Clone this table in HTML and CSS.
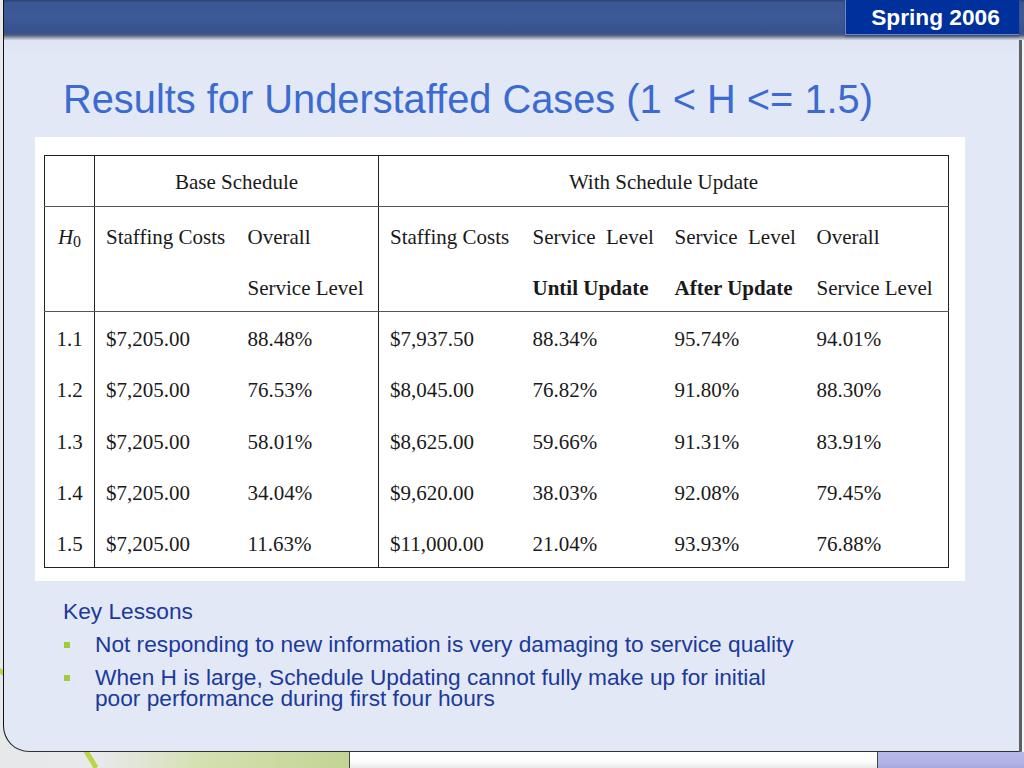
FILE: index.html
```html
<!DOCTYPE html>
<html lang="en">
<head>
<meta charset="utf-8">
<title>Results for Understaffed Cases</title>
<link rel="stylesheet" href="styles.css">
</head>
<body>
<div class="slide">
  <svg class="deco" width="1024" height="768" viewBox="0 0 1024 768" aria-hidden="true">
    <path d="M -20 660 Q 60 700 96 768" fill="none" stroke="#b9d54a" stroke-width="5"/>
  </svg>
  <header class="topbar">
    <div class="badge">Spring 2006</div>
  </header>
  <main class="panel">
    <h1 class="title">Results for Understaffed Cases (1 &lt; H &lt;= 1.5)</h1>
    <div class="figure">
      <table class="results">
        <colgroup>
          <col class="c0"><col class="c1"><col class="c1"><col class="c2"><col class="c1"><col class="c1"><col class="c2">
        </colgroup>
        <thead>
          <tr class="group-row">
            <th class="h0"></th>
            <th colspan="2" class="group vline">Base Schedule</th>
            <th colspan="4" class="group vline">With Schedule Update</th>
          </tr>
          <tr class="label-row">
            <th class="h0"><span class="ln"><i>H</i><sub>0</sub></span></th>
            <th class="vline"><span class="ln">Staffing Costs</span></th>
            <th><span class="ln">Overall</span><span class="ln ln2">Service Level</span></th>
            <th class="vline"><span class="ln">Staffing Costs</span></th>
            <th><span class="ln">Service&nbsp; Level</span><span class="ln ln2"><b>Until Update</b></span></th>
            <th><span class="ln">Service&nbsp; Level</span><span class="ln ln2"><b>After Update</b></span></th>
            <th><span class="ln">Overall</span><span class="ln ln2">Service Level</span></th>
          </tr>
        </thead>
        <tbody>
          <tr><td class="h0">1.1</td><td class="vline">$7,205.00</td><td>88.48%</td><td class="vline">$7,937.50</td><td>88.34%</td><td>95.74%</td><td>94.01%</td></tr>
          <tr><td class="h0">1.2</td><td class="vline">$7,205.00</td><td>76.53%</td><td class="vline">$8,045.00</td><td>76.82%</td><td>91.80%</td><td>88.30%</td></tr>
          <tr><td class="h0">1.3</td><td class="vline">$7,205.00</td><td>58.01%</td><td class="vline">$8,625.00</td><td>59.66%</td><td>91.31%</td><td>83.91%</td></tr>
          <tr><td class="h0">1.4</td><td class="vline">$7,205.00</td><td>34.04%</td><td class="vline">$9,620.00</td><td>38.03%</td><td>92.08%</td><td>79.45%</td></tr>
          <tr class="last"><td class="h0">1.5</td><td class="vline">$7,205.00</td><td>11.63%</td><td class="vline">$11,000.00</td><td>21.04%</td><td>93.93%</td><td>76.88%</td></tr>
        </tbody>
      </table>
    </div>
    <section class="lessons">
      <p class="lessons-head">Key Lessons</p>
      <ul class="lessons-list">
        <li>Not responding to new information is very damaging to service quality</li>
        <li>When H is large, Schedule Updating cannot fully make up for initial poor performance during first four hours</li>
      </ul>
    </section>
  </main>
  <footer class="strip">
    <div class="seg seg-green"></div>
    <div class="seg seg-white"></div>
    <div class="seg seg-lav"></div>
  </footer>
</div>
</body>
</html>
```

FILE: styles.css
```css
* { box-sizing: border-box; }
html, body { margin: 0; padding: 0; }
body {
  width: 1024px;
  height: 768px;
  overflow: hidden;
  font-family: "Liberation Sans", Arial, sans-serif;
  background: #eceef0;
}
.slide {
  position: relative;
  width: 1024px;
  height: 768px;
  display: flex;
  flex-direction: column;
  background: linear-gradient(90deg, #e6e8ea 0, #f2f3f4 100%);
}
.deco {
  position: absolute;
  left: 0;
  top: 0;
  z-index: 0;
}
.topbar {
  position: relative;
  z-index: 1;
  height: 40px;
  margin-left: 3px;
  border-left: 1px solid #111;
  display: flex;
  justify-content: flex-end;
  align-items: flex-start;
  background: linear-gradient(180deg, #2c4172 0, #3a5693 6%, #3d5a98 45%, #36518b 82%, #4d5c80 88%, #8c93a8 93%, #d3d7e2 100%);
}
.badge {
  width: 174px;
  height: 35px;
  margin-right: 5px;
  background: #00309c;
  border-left: 1px solid #6f86c4;
  border-bottom: 1px solid #7188c2;
  box-shadow: 0 2px 2px rgba(40, 50, 80, 0.45);
  color: #fff;
  font-weight: bold;
  font-size: 22.7px;
  line-height: 34px;
  text-align: center;
  padding-left: 6px;
}
.panel {
  position: relative;
  z-index: 1;
  height: 712px;
  margin-left: 3px;
  margin-right: 2px;
  border-left: 1px solid #111;
  border-right: 3px solid #5d5f66;
  border-bottom: 1px solid #333;
  border-bottom-left-radius: 26px;
  background: linear-gradient(180deg, #dfe4f2 0, #e3e8f7 2%, #e3e8f7 100%);
  padding-top: 36px;
}
.title {
  margin: 0 0 0 59px;
  font-weight: normal;
  font-size: 39.8px;
  line-height: 46px;
  color: #3b6bd0;
  white-space: nowrap;
}
.figure {
  margin: 15px 0 0 31px;
  width: 930px;
  height: 444px;
  background: #fff;
  padding: 18px 0 0 9px;
}
.results {
  table-layout: fixed;
  border-collapse: collapse;
  width: 904px;
  font-family: "Liberation Serif", "Times New Roman", serif;
  font-size: 21px;
  color: #1a1a1a;
  border: 1px solid #222;
}
.results .c0 { width: 50px; }
.results .c1 { width: 142px; }
.results .c2 { width: 143px; }
.results th, .results td {
  font-weight: normal;
  text-align: left;
  padding: 0 0 0 11px;
  white-space: nowrap;
  vertical-align: top;
}
.results b { font-weight: bold; }
.results .vline { border-left: 1px solid #222; }
.results .h0 { text-align: center; padding-left: 0; }
.group-row th {
  height: 50px;
  padding-top: 3px;
  line-height: 47px;
  text-align: center;
  padding-left: 0;
  border-bottom: 1px solid #555;
}
.label-row th {
  padding-top: 15px;
  padding-bottom: 8px;
  border-bottom: 1px solid #555;
}
.label-row .ln {
  display: block;
  line-height: 30px;
  height: 30px;
}
.label-row .ln2 { margin-top: 21px; }
.label-row th:not(:has(.ln2))::after {
  content: "";
  display: block;
  height: 51px;
}
.label-row .h0 i { font-style: italic; }
.label-row .h0 sub { font-size: 16px; vertical-align: -3px; line-height: 0; }
.results tbody td {
  line-height: 30px;
  padding-top: 12px;
  padding-bottom: 9.25px;
}
.results tbody tr.last td { padding-bottom: 8px; }
.lessons {
  margin: 19px 0 0 59px;
  color: #1b3a9a;
  font-size: 22.7px;
}
.lessons-head {
  margin: 0;
  line-height: 22px;
}
.lessons-list {
  list-style: none;
  margin: 0;
  padding: 0;
  width: 750px;
}
.lessons-list li {
  display: flex;
  margin-top: 12px;
  line-height: 21px;
}
.lessons-list li::before {
  content: "";
  flex: 0 0 6px;
  width: 6px;
  height: 6px;
  margin: 8px 25px 0 1px;
  background: #9fcb3c;
}
.strip {
  position: relative;
  z-index: 1;
  flex: 1;
  display: flex;
}
.seg { height: 16px; }
.seg-green {
  width: 350px;
  background: linear-gradient(90deg, rgba(236, 238, 232, 0) 0, rgba(236, 238, 232, 0) 100px, #d5e0b2 200px, #c3d493 350px);
  border-right: 1px solid #444;
}
.seg-white {
  width: 528px;
  background: linear-gradient(180deg, #ffffff 0, #fdfdfd 60%, #e8e8ea 100%);
  border-right: 1px solid #444;
}
.seg-lav {
  flex: 1;
  background: linear-gradient(180deg, #b8baee 0, #b0b2e8 70%, #a6a8d8 100%);
}
```
